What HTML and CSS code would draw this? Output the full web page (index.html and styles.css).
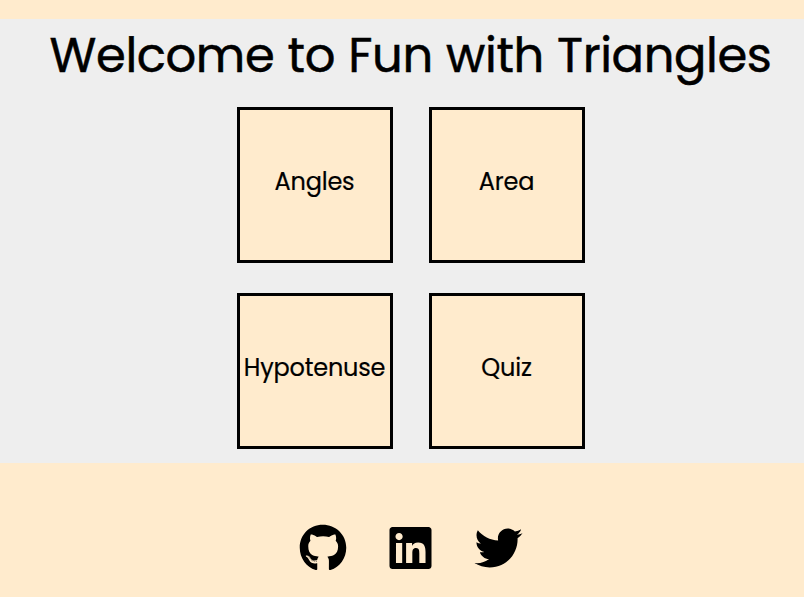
FILE: index.html
```html
<!DOCTYPE html>
<html lang="en">
<head>
<meta charset="utf-8">
<title>Fun with Triangles</title>
<link rel="stylesheet" href="styles.css">
</head>
<body>
<main>
<h1>Welcome to Fun with Triangles</h1>
<nav class="grid">
<a class="card">Angles</a>
<a class="card">Area</a>
<a class="card">Hypotenuse</a>
<a class="card">Quiz</a>
</nav>
</main>
<footer>
<svg class="github" viewBox="0 0 496 512"><path d="M165.900 397.400c0 2-2.300 3.600-5.200 3.600-3.300.3-5.600-1.300-5.600-3.600 0-2 2.300-3.600 5.200-3.600 3-.3 5.600 1.300 5.600 3.600zm-31.100-4.500c-.7 2 1.300 4.300 4.300 4.900 2.600 1 5.600 0 6.200-2s-1.300-4.300-4.300-5.200c-2.600-.7-5.500.3-6.200 2.300zm44.200-1.700c-2.900.7-4.900 2.600-4.600 4.900.3 2 2.900 3.300 5.900 2.600 2.900-.7 4.900-2.600 4.600-4.600-.3-1.900-3-3.200-5.900-2.900zM244.800 8C106.100 8 0 113.300 0 252c0 110.900 69.800 205.800 169.500 239.200 12.800 2.300 17.300-5.600 17.300-12.100 0-6.200-.3-40.400-.3-61.400 0 0-70 15-84.700-29.800 0 0-11.400-29.100-27.800-36.600 0 0-22.900-15.700 1.600-15.400 0 0 24.900 2 38.600 25.800 21.900 38.600 58.600 27.500 72.900 20.900 2.300-16 8.800-27.100 16-33.700-55.900-6.200-112.300-14.300-112.300-110.500 0-27.500 7.600-41.300 23.600-58.900-2.600-6.500-11.100-33.300 2.600-67.900 20.900-6.500 69 27 69 27 20-5.600 41.500-8.500 62.800-8.500s42.800 2.900 62.800 8.500c0 0 48.100-33.600 69-27 13.700 34.700 5.200 61.400 2.600 67.900 16 17.700 25.800 31.500 25.800 58.900 0 96.500-58.900 104.200-114.800 110.500 9.200 7.900 17 22.900 17 46.400 0 33.700-.3 75.400-.3 83.600 0 6.500 4.600 14.400 17.300 12.100C428.200 457.800 496 362.900 496 252 496 113.300 383.500 8 244.800 8zM97.200 352.900c-1.300 1-1 3.300.7 5.200 1.600 1.600 3.900 2.300 5.200 1 1.300-1 1-3.300-.7-5.200-1.600-1.600-3.900-2.300-5.200-1zm-10.800-8.100c-.7 1.300.3 2.900 2.300 3.900 1.600 1 3.600.7 4.300-.7.7-1.300-.3-2.900-2.300-3.900-2-.6-3.600-.3-4.300.7zm32.400 35.600c-1.600 1.300-1 4.300 1.300 6.200 2.300 2.300 5.200 2.600 6.500 1 1.300-1.300.7-4.300-1.300-6.200-2.200-2.300-5.200-2.600-6.500-1zm-11.400-14.700c-1.600 1-1.600 3.600 0 5.900 1.600 2.300 4.300 3.300 5.600 2.300 1.600-1.300 1.600-3.900 0-6.200-1.400-2.300-4-3.300-5.600-2z"/></svg>
<svg class="linkedin" viewBox="0 0 448 512"><path d="M416 32H31.900C14.300 32 0 46.500 0 64.300v383.400C0 465.500 14.300 480 31.900 480H416c17.600 0 32-14.500 32-32.300V64.300c0-17.800-14.400-32.300-32-32.300zM135.400 416H69V202.200h66.500V416zm-33.200-243c-21.300 0-38.500-17.300-38.500-38.500S80.900 96 102.200 96c21.200 0 38.500 17.300 38.500 38.500 0 21.300-17.200 38.500-38.500 38.500zm282.100 243h-66.400V312c0-24.800-.5-56.700-34.500-56.700-34.600 0-39.900 27-39.900 54.900V416h-66.400V202.200h63.700v29.200h.9c8.900-16.800 30.600-34.500 62.900-34.500 67.200 0 79.700 44.300 79.700 101.900V416z"/></svg>
<svg class="twitter" viewBox="0 0 512 512"><path d="M459.370 151.716c.325 4.548.325 9.097.325 13.645 0 138.720-105.583 298.558-298.558 298.558-59.452 0-114.680-17.219-161.137-47.106 8.447.974 16.568 1.299 25.340 1.299 49.055 0 94.213-16.568 130.274-44.832-46.132-.975-84.792-31.188-98.112-72.772 6.498.974 12.995 1.624 19.818 1.624 9.421 0 18.843-1.300 27.614-3.573-48.081-9.747-84.143-51.980-84.143-102.985v-1.299c13.969 7.797 30.214 12.670 47.431 13.319-28.264-18.843-46.781-51.005-46.781-87.391 0-19.492 5.197-37.360 14.294-52.954 51.655 63.675 129.300 105.258 216.365 109.807-1.624-7.797-2.599-15.918-2.599-24.040 0-57.828 46.782-104.934 104.934-104.934 30.213 0 57.502 12.670 76.670 33.137 23.715-4.548 46.456-13.320 66.599-25.340-7.798 24.366-24.366 44.833-46.132 57.827 21.117-2.273 41.584-8.122 60.426-16.243-14.292 20.791-32.161 39.308-52.628 54.253z"/></svg>
</footer>
</body>
</html>
```
FILE: styles.css
```css
* { box-sizing: border-box; }
body { margin: 0; padding-top: 19px; min-height: 597px; background: #ffebcd; color: #000; font-family: Poppins, Lato, sans-serif; }
main { height: 444px; padding-left: 17px; background: #eee; }
h1 { margin: 0; height: 88px; font-size: 48px; font-weight: 400; line-height: 74px; letter-spacing: -0.4px; word-spacing: 0.9px; text-align: center; white-space: nowrap; -webkit-text-stroke: 0.5px #000; }
svg { display: block; }
.grid { display: grid; grid-template-columns: 156px 156px; grid-auto-rows: 156px; gap: 30px 36px; justify-content: center; }
.card { display: flex; align-items: center; justify-content: center; border: 3px solid #000; background: #ffebcd; font-size: 24px; line-height: 38px; letter-spacing: -0.2px; padding-bottom: 6px; -webkit-text-stroke: 0.2px #000; }
footer { display: flex; align-items: center; padding: 61px 0 0 299px; }
.github { width: 48px; height: 48px; }
.linkedin { width: 43px; height: 48px; margin-left: 42px; }
.twitter { width: 49px; height: 48px; margin-left: 42px; }
```
